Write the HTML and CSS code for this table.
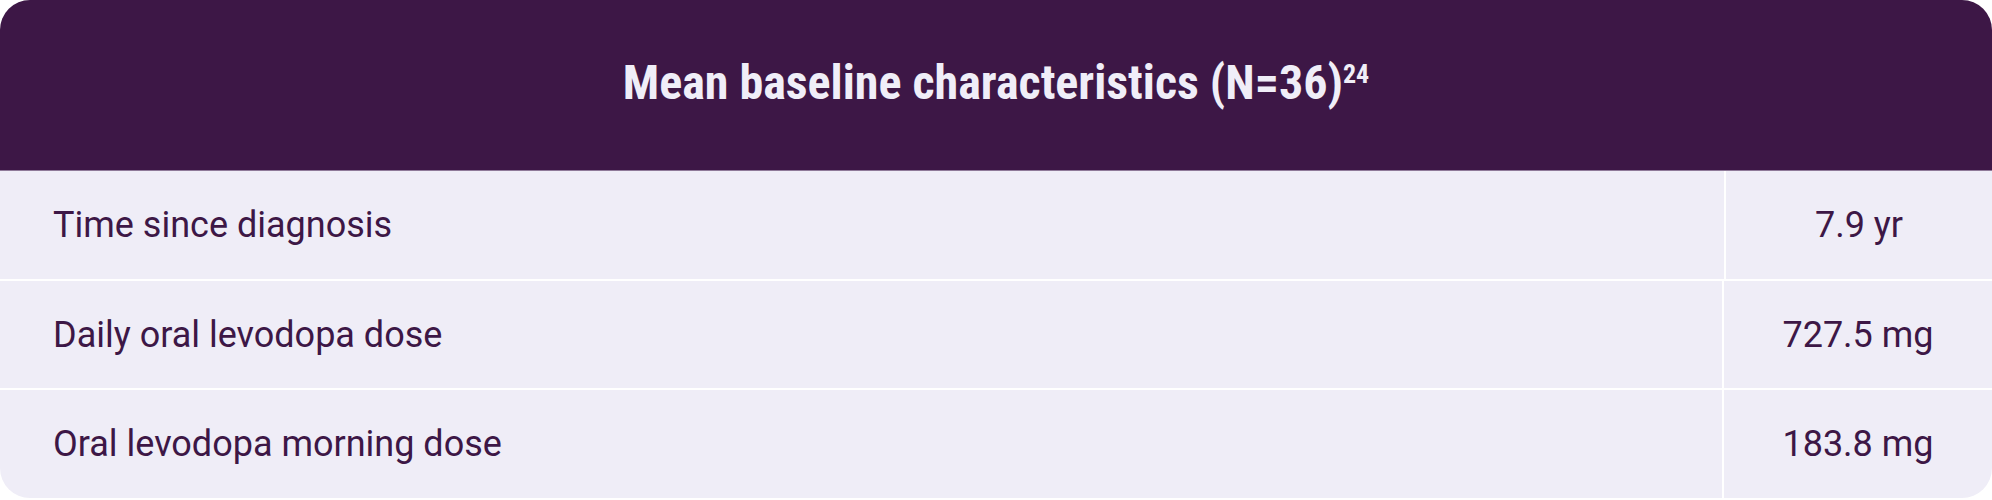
FILE: index.html
```html
<!DOCTYPE html>
<html lang="en">
<head>
<meta charset="utf-8">
<title>Mean baseline characteristics</title>
<link rel="stylesheet" href="styles.css">
</head>
<body>
<div class="card">
  <div class="head">
    <h1 class="title">Mean baseline characteristics (N=36)<sup>24</sup></h1>
  </div>
  <div class="row row-first">
    <div class="label">Time since diagnosis</div>
    <div class="value">7.9 yr</div>
  </div>
  <div class="row">
    <div class="label">Daily oral levodopa dose</div>
    <div class="value">727.5 mg</div>
  </div>
  <div class="row">
    <div class="label">Oral levodopa morning dose</div>
    <div class="value">183.8 mg</div>
  </div>
</div>
</body>
</html>
```

FILE: styles.css
```css
html, body {
  margin: 0;
  padding: 0;
  background: #ffffff;
}

.card {
  width: 1992px;
  height: 498px;
  border-radius: 30px;
  overflow: hidden;
  background: #ffffff;
  display: flex;
  flex-direction: column;
  gap: 2px;
  font-family: Roboto, "Liberation Sans", sans-serif;
}

.head {
  height: 170px;
  background: #3d1746;
  border-bottom: 1px solid #8f7a99;
  display: flex;
  align-items: center;
  justify-content: center;
  margin-bottom: -2px;
}

.title {
  margin: 0;
  color: #f0eef8;
  font-family: "Roboto Condensed", Roboto, sans-serif;
  font-stretch: condensed;
  font-weight: 700;
  font-size: 48px;
  line-height: 1;
  padding-bottom: 4px;
}

.title sup {
  font-size: 26px;
  vertical-align: 0.6em;
  line-height: 0;
}

.row {
  flex: 1;
  display: grid;
  grid-template-columns: 1722px 1fr;
  column-gap: 2px;
}

.row-first {
  grid-template-columns: 1724px 1fr;
}

.label, .value {
  background: #efedf7;
  color: #3d1746;
  font-size: 36px;
  display: flex;
  align-items: center;
}

.label {
  padding-left: 53px;
}

.value {
  justify-content: center;
}
```
